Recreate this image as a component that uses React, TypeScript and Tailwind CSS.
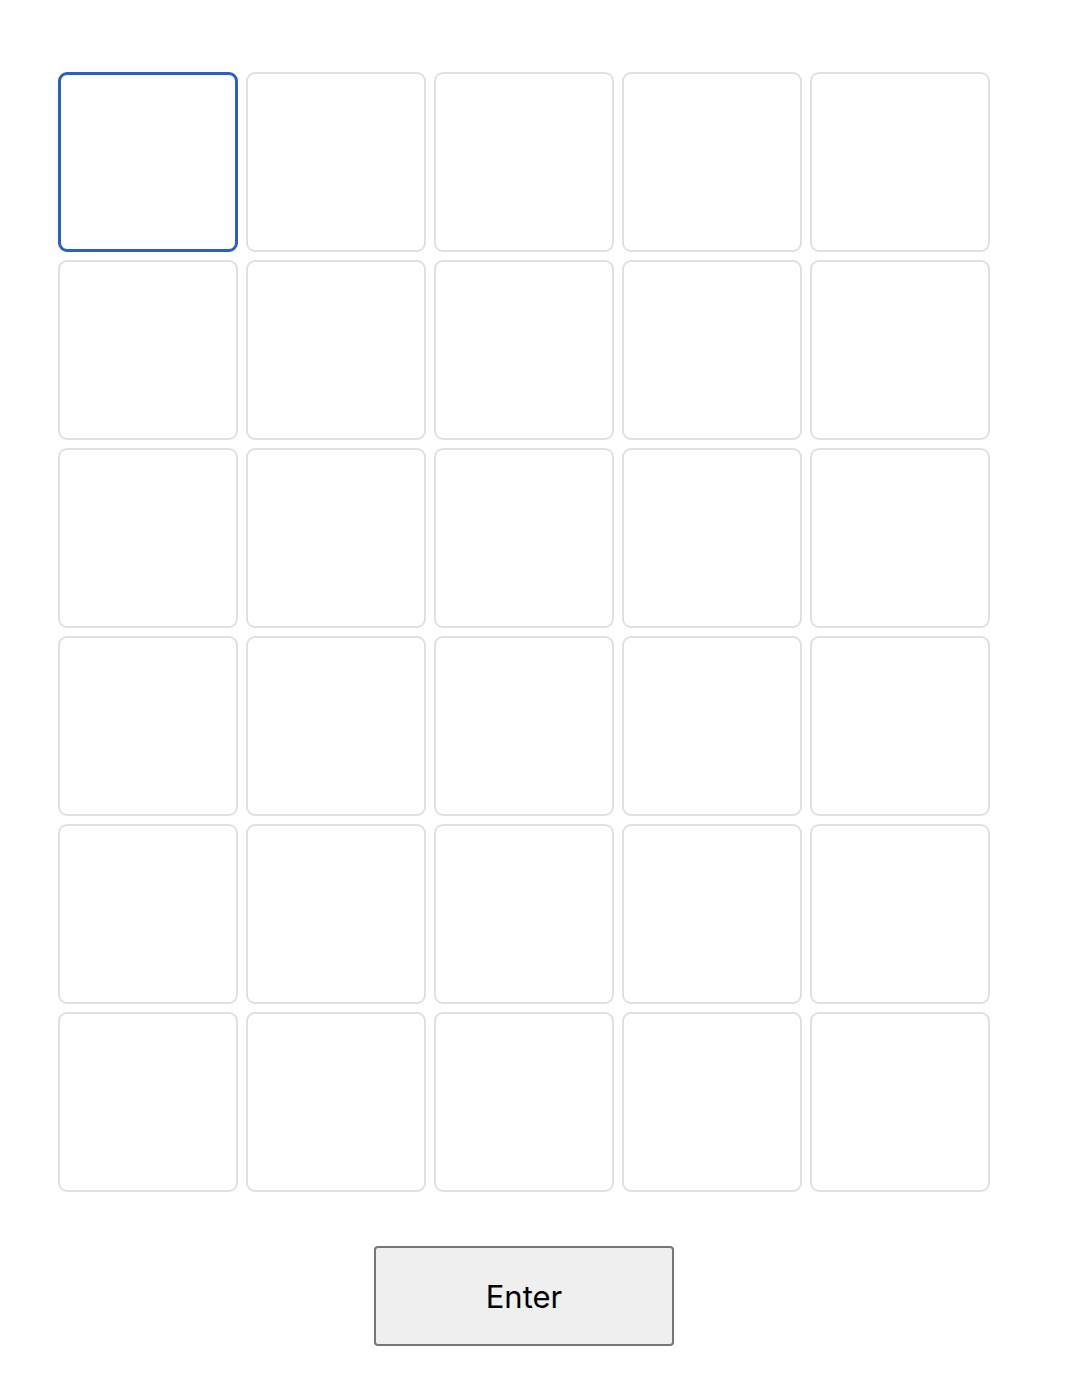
import React from 'react';

const rows = 6;
const cols = 5;

const App: React.FC = () => {
  const cells = Array.from({ length: rows * cols }, (_, i) => i);

  return (
    <div className="min-h-screen bg-white pt-[72px] pl-[58px]" style={{ fontFamily: '"Helvetica Neue", Inter, "Liberation Sans", sans-serif' }}>
      <div className="w-[932px]">
        {/* Board */}
        <div className="grid grid-cols-[repeat(5,180px)] grid-rows-[repeat(6,180px)] gap-[8px]">
          {cells.map((i) => (
            <div
              key={i}
              className={
                i === 0
                  ? 'rounded-[9px] border-[3px] border-[#2a5fc8] bg-white'
                  : 'rounded-[9px] border-2 border-[#e0e0e0] bg-white'
              }
            />
          ))}
        </div>

        {/* Submit */}
        <div className="flex justify-center mt-[54px]">
          <button className="w-[300px] h-[100px] bg-[#efefef] border-2 border-[#767676] rounded-[4px] pt-[3px] text-[31px] text-black">
            Enter
          </button>
        </div>
      </div>
    </div>
  );
};

export default App;
